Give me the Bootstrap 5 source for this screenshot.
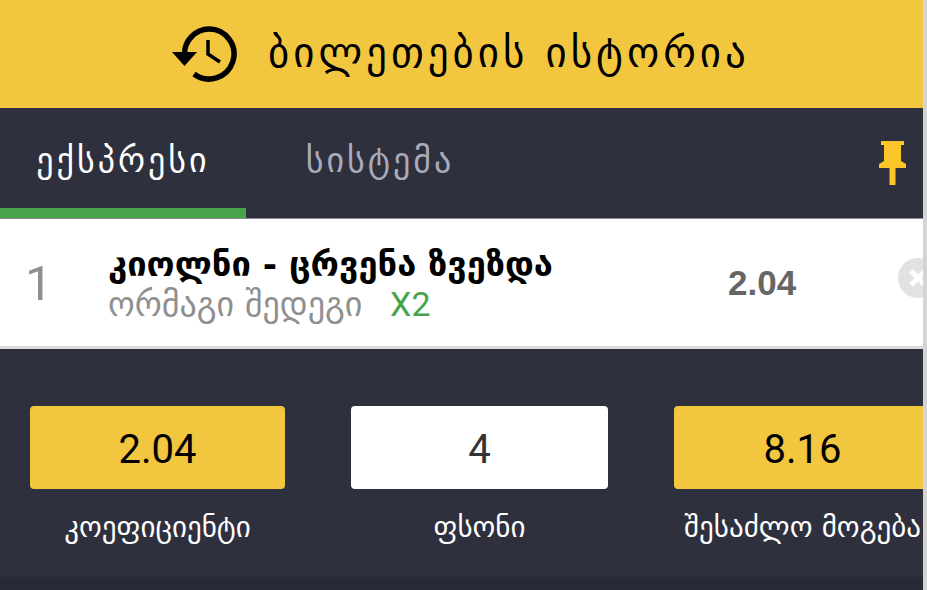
<!DOCTYPE html>
<html lang="ka">
<head>
  <meta charset="UTF-8">
  <title>ბილეთების ისტორია</title>
  <link href="https://cdn.jsdelivr.net/npm/bootstrap@5.3.0/dist/css/bootstrap.min.css" rel="stylesheet">
  <style>
    html, body { height: 590px; overflow: hidden; background: #d4d4d4; }
    body { font-family: "DejaVu Sans", "Noto Sans", sans-serif; }
    .page-wrap { width: 923px; height: 590px; overflow: hidden; background: #2e303d; }
    .top-bar { height: 108px; background: #f2c73f; color: #000; font-size: 41px; letter-spacing: 4px; padding-left: 171px; gap: 29px; }
    .tab-bar { height: 111px; border-bottom: 1px solid #8a8b92; }
    .tab-item { width: 246px; height: 110px; padding-top: 4px; font-size: 34px; letter-spacing: 3px; color: #a9abbb; border-bottom: 10px solid transparent; }
    .tab-item.is-active { color: #fff; border-bottom-color: #46a34a; }
    .tab-second { width: 268px; }
    .pin-box { padding-right: 17px; }
    .ticket-row { height: 130px; padding-top: 2px; background: #fff; border-bottom: 3px solid #dcdcdc; overflow: hidden; }
    .row-num { width: 108px; padding-left: 25px; font-family: Roboto, sans-serif; font-size: 49px; color: #8f8f8f; }
    .match-info { width: 620px; }
    .match-name { font-size: 34.500px; font-weight: 700; color: #000; line-height: 40px; }
    .market-name { font-size: 34px; color: #8f8f8f; line-height: 40px; }
    .market-pick { font-family: Roboto, sans-serif; font-size: 34px; color: #46a34a; margin-left: 17px; }
    .odd-val { width: 170px; font-family: "Liberation Sans", sans-serif; font-size: 35px; font-weight: 700; color: #666; }
    .close-dot { width: 40px; height: 40px; flex-shrink: 0; margin-bottom: 12px; border-radius: 50%; background: #e2e2e2; }
    .stats-row { padding: 57px 0 0 30px; gap: 66px; overflow: hidden; }
    .stat-col { width: 257px; flex-shrink: 0; }
    .stat-col.is-first { width: 255px; }
    .stat-box { height: 83px; padding-top: 4px; border-radius: 4px; font-family: Roboto, sans-serif; font-size: 40px; color: #000; background: #f2c73f; }
    .stat-box.is-white { background: #fff; color: #333; }
    .stat-label { margin-top: 20px; font-size: 29px; line-height: 36px; color: #fff; white-space: nowrap; }
    .bottom-strip { height: 13px; background: #282a36; margin-top: 32px; }
  </style>
</head>
<body>
  <div class="page-wrap">
    <div class="top-bar d-flex align-items-center">
      <svg width="68" height="56" viewBox="0 0 68 56">
        <path d="M38 3a25 25 0 1 1-15 45" fill="none" stroke="#000" stroke-width="5.500"/>
        <path d="M38 3A25 25 0 0 0 13.500 28" fill="none" stroke="#000" stroke-width="5.500"/>
        <path d="M1 26h25L13.500 40z" fill="#000"/>
        <path d="M37 14v14l12 8" fill="none" stroke="#000" stroke-width="3.500"/>
      </svg>
      <span>ბილეთების ისტორია</span>
    </div>

    <div class="tab-bar d-flex">
      <div class="tab-item is-active d-flex align-items-center justify-content-center">ექსპრესი</div>
      <div class="tab-item tab-second d-flex align-items-center justify-content-center">სისტემა</div>
      <div class="pin-box ms-auto d-flex align-items-center">
        <svg width="27" height="44" viewBox="0 0 27 44">
          <path d="M2 0h23v4h-3v16l5 3v4H0v-4l5-3V4H2z" fill="#fcc62a"/>
          <rect x="10.500" y="27" width="6" height="17" fill="#fcc62a"/>
        </svg>
      </div>
    </div>

    <div class="ticket-row d-flex align-items-center">
      <div class="row-num flex-shrink-0">1</div>
      <div class="match-info flex-shrink-0">
        <div class="match-name">კიოლნი - ცრვენა ზვეზდა</div>
        <div class="market-name">ორმაგი შედეგი <span class="market-pick">X2</span></div>
      </div>
      <div class="odd-val flex-shrink-0">2.04</div>
      <div class="close-dot d-flex align-items-center justify-content-center">
        <svg width="18" height="18" viewBox="0 0 18 18">
          <path d="M2 2l14 14M16 2L2 16" stroke="#fff" stroke-width="5"/>
        </svg>
      </div>
    </div>

    <div class="stats-row d-flex">
      <div class="stat-col is-first text-center">
        <div class="stat-box d-flex align-items-center justify-content-center">2.04</div>
        <div class="stat-label">კოეფიციენტი</div>
      </div>
      <div class="stat-col text-center">
        <div class="stat-box is-white d-flex align-items-center justify-content-center">4</div>
        <div class="stat-label">ფსონი</div>
      </div>
      <div class="stat-col text-center">
        <div class="stat-box d-flex align-items-center justify-content-center">8.16</div>
        <div class="stat-label">შესაძლო მოგება</div>
      </div>
    </div>
    <div class="bottom-strip"></div>
  </div>
  <script src="https://cdn.jsdelivr.net/npm/bootstrap@5.3.0/dist/js/bootstrap.bundle.min.js"></script>
</body>
</html>
